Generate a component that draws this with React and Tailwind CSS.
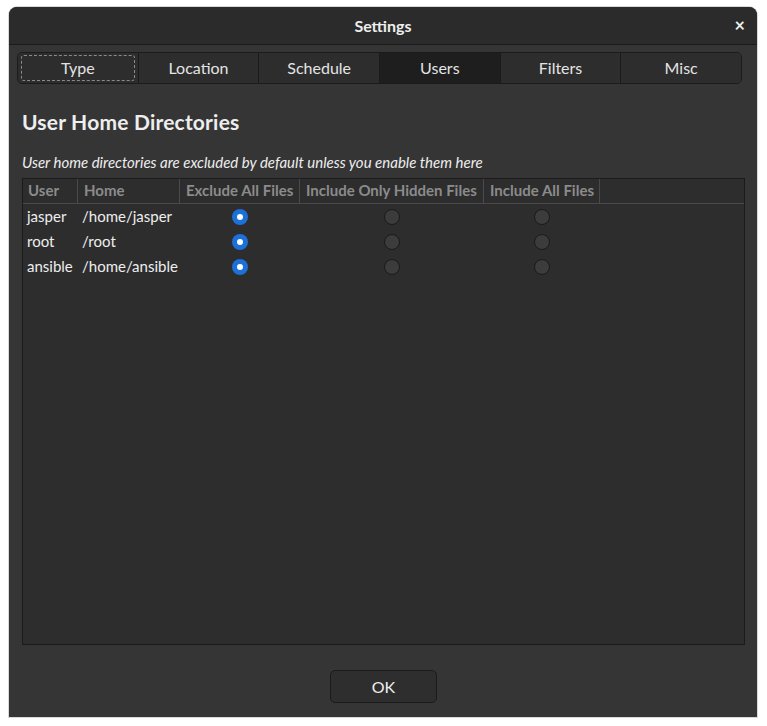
import React from 'react';

const tabs = ['Type', 'Location', 'Schedule', 'Users', 'Filters', 'Misc'];

const users = [
  { name: 'jasper', home: '/home/jasper' },
  { name: 'root', home: '/root' },
  { name: 'ansible', home: '/home/ansible' },
];

function Radio({ checked }) {
  if (checked) {
    return (
      <span className="flex h-[16px] w-[16px] items-center justify-center rounded-full bg-[#1c71d8]">
        <span className="h-[6px] w-[6px] rounded-full bg-white" />
      </span>
    );
  }
  return <span className="block h-[16px] w-[16px] rounded-full border border-[#1a1a1a] bg-[#3c3c3c]" />;
}

export default function App() {
  return (
    <div className="h-[726px] w-[767px] bg-white pl-[9px] pt-[7px]" style={{ fontFamily: 'Lato, "Noto Sans", sans-serif' }}>
      <div className="flex h-[710px] w-[748px] flex-col overflow-hidden rounded-t-[8px] bg-[#353535] text-[#eeeeee] shadow-[0_0_0_1px_rgba(0,0,0,0.15)]">
        {/* title bar */}
        <div className="relative flex h-[38px] shrink-0 items-center justify-center border-b border-[#1b1b1b] bg-[#2b2b2b]">
          <span className="text-[16px] font-bold">Settings</span>
          <span className="absolute right-[12px] top-[9px] text-[18px] font-bold leading-none">×</span>
        </div>

        {/* tabs */}
        <div className="px-[8px] pt-[7px]">
          <div className="flex h-[32px] w-[725px] overflow-hidden rounded-[5px] border border-[#1b1b1b]">
            {tabs.map((t, i) => (
              <div
                key={t}
                className={
                  'flex flex-1 items-center justify-center text-[16px] text-[#e4e4e4] ' +
                  (i > 0 ? 'border-l border-[#1b1b1b] ' : '') +
                  (t === 'Users' ? 'bg-[#1e1e1e]' : 'bg-[#2d2d2d]')
                }
              >
                {t === 'Type' ? (
                  <span className="flex h-[26px] w-[114px] items-center justify-center rounded-[3px] border border-dashed border-[#8a8a8a]">
                    {t}
                  </span>
                ) : (
                  t
                )}
              </div>
            ))}
          </div>
        </div>

        {/* content */}
        <div className="flex flex-1 flex-col px-[13px] pr-[12px]">
          <h1 className="mt-[24px] text-[21px] font-bold leading-[28px] tracking-[0.2px]">User Home Directories</h1>
          <p className="mt-[16px] text-[15px] italic leading-[20px]">
            User home directories are excluded by default unless you enable them here
          </p>
          <div className="mt-[6px] h-[467px] border border-[#1b1b1b] bg-[#2d2d2d]">
            <div className="flex h-[25px] whitespace-nowrap border-b border-[#4a4a4a] text-[15px] font-bold text-[#8b8b8b]">
              <div className="w-[55px] border-r border-[#4a4a4a] px-[5px] leading-[23px]">User</div>
              <div className="w-[102px] border-r border-[#4a4a4a] px-[6px] leading-[23px]">Home</div>
              <div className="w-[120px] border-r border-[#4a4a4a] px-[6px] leading-[23px]">Exclude All Files</div>
              <div className="w-[184px] border-r border-[#4a4a4a] px-[6px] leading-[23px]">Include Only Hidden Files</div>
              <div className="w-[116px] border-r border-[#4a4a4a] px-[6px] leading-[23px]">Include All Files</div>
            </div>
            <div>
              {users.map((u) => (
                <div key={u.name} className="flex h-[25px] items-center whitespace-nowrap text-[15px]">
                  <div className="w-[55px] px-[4px]">{u.name}</div>
                  <div className="w-[102px] px-[4px]">{u.home}</div>
                  <div className="flex w-[120px] justify-center">
                    <Radio checked />
                  </div>
                  <div className="flex w-[184px] justify-center">
                    <Radio />
                  </div>
                  <div className="flex w-[116px] justify-center">
                    <Radio />
                  </div>
                </div>
              ))}
            </div>
          </div>

          <div className="mt-[25px] flex justify-center">
            <button className="h-[33px] w-[107px] rounded-[5px] border border-[#1b1b1b] bg-[#2e2e2e] text-[16px] text-[#eeeeee]">
              OK
            </button>
          </div>
        </div>
      </div>
    </div>
  );
}
